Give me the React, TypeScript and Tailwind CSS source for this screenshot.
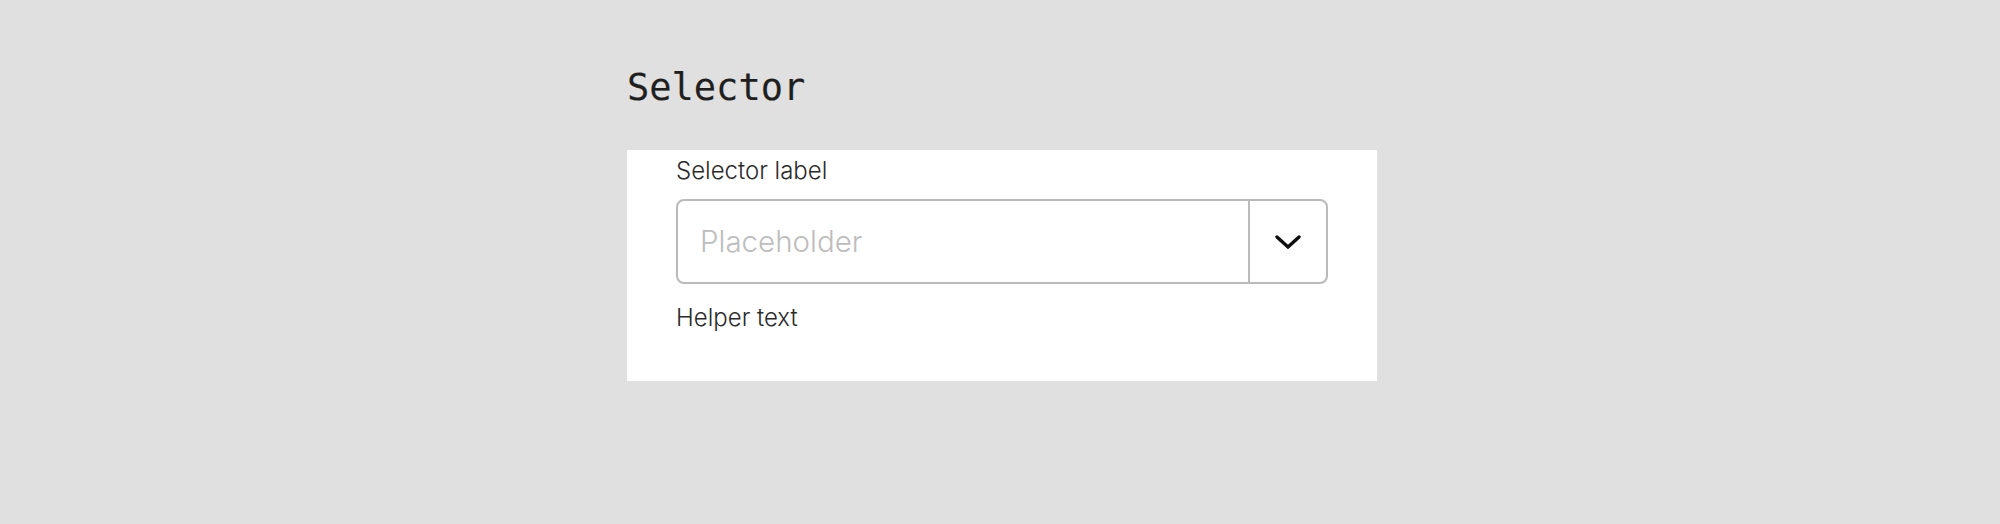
export default function App() {
  return (
    <div className="min-h-[524px] w-full bg-[#e0e0e0]">
      <div className="ml-[calc(50%-373px)] w-[750px] pt-[68px]">
        <h1 className="font-['DejaVu_Sans_Mono',monospace] text-[37px] leading-[40px] text-[#1f1f1f] [-webkit-text-stroke:0.15px_#1f1f1f]">
          Selector
        </h1>
        <div className="mt-[42px] bg-white px-[49px] pb-[51px] pt-[9px] font-['Inter',sans-serif] font-light">
          <label className="block text-[24px] leading-[24px] text-[#2b2b2b]">
            Selector label
          </label>
          <div className="mt-[16px] flex h-[85px] rounded-[8px] border-2 border-[#bababa]">
            <div className="flex flex-1 items-center pl-[22px] text-[29.5px] text-[#bdbdbd]">
              Placeholder
            </div>
            <button
              type="button"
              className="flex w-[78px] items-center justify-center border-l-2 border-[#bababa]"
            >
              <svg width="26" height="16" viewBox="0 0 26 16" fill="none" aria-hidden>
                <path
                  d="M2 3 L13 13 L24 3"
                  stroke="#0d0d0d"
                  strokeWidth="3.4"
                  strokeLinecap="round"
                  strokeLinejoin="miter"
                />
              </svg>
            </button>
          </div>
          <p className="mt-[22px] text-[24px] leading-[24px] text-[#2b2b2b]">Helper text</p>
        </div>
      </div>
    </div>
  )
}
